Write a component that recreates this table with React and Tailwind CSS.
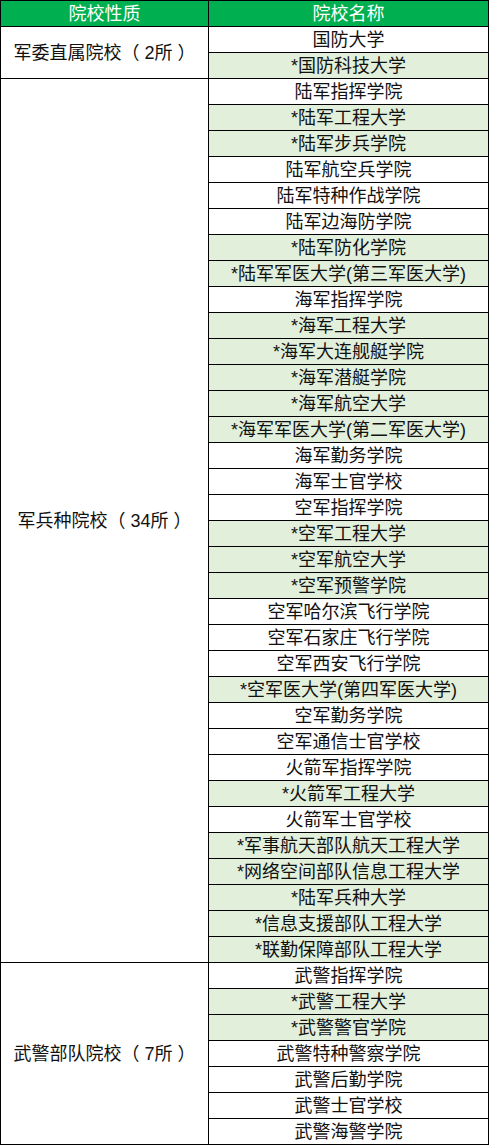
import React from "react";

const groups = [
  {
    name: "军委直属院校（ 2所 ）",
    rows: [
      ["国防大学", false],
      ["*国防科技大学", true],
    ],
  },
  {
    name: "军兵种院校（ 34所 ）",
    rows: [
      ["陆军指挥学院", false],
      ["*陆军工程大学", true],
      ["*陆军步兵学院", true],
      ["陆军航空兵学院", false],
      ["陆军特种作战学院", false],
      ["陆军边海防学院", false],
      ["*陆军防化学院", true],
      ["*陆军军医大学(第三军医大学)", true],
      ["海军指挥学院", false],
      ["*海军工程大学", true],
      ["*海军大连舰艇学院", true],
      ["*海军潜艇学院", true],
      ["*海军航空大学", true],
      ["*海军军医大学(第二军医大学)", true],
      ["海军勤务学院", false],
      ["海军士官学校", false],
      ["空军指挥学院", false],
      ["*空军工程大学", true],
      ["*空军航空大学", true],
      ["*空军预警学院", true],
      ["空军哈尔滨飞行学院", false],
      ["空军石家庄飞行学院", false],
      ["空军西安飞行学院", false],
      ["*空军医大学(第四军医大学)", true],
      ["空军勤务学院", false],
      ["空军通信士官学校", false],
      ["火箭军指挥学院", false],
      ["*火箭军工程大学", true],
      ["火箭军士官学校", false],
      ["*军事航天部队航天工程大学", true],
      ["*网络空间部队信息工程大学", true],
      ["*陆军兵种大学", true],
      ["*信息支援部队工程大学", true],
      ["*联勤保障部队工程大学", true],
    ],
  },
  {
    name: "武警部队院校（ 7所 ）",
    rows: [
      ["武警指挥学院", false],
      ["*武警工程大学", true],
      ["*武警警官学院", true],
      ["武警特种警察学院", false],
      ["武警后勤学院", false],
      ["武警士官学校", false],
      ["武警海警学院", false],
    ],
  },
];

export default function App() {
  return (
    <div
      className="w-[489px] bg-white text-[18px] leading-none text-[#111]"
      style={{ fontFamily: '"Liberation Sans", "Noto Sans CJK SC", sans-serif' }}
    >
      <div className="flex h-[27px] border-t border-black bg-[#00b050] text-white">
        <div className="flex w-[209px] items-center justify-center border-x border-b border-black">
          院校性质
        </div>
        <div className="flex flex-1 items-center justify-center border-r border-b border-black">
          院校名称
        </div>
      </div>
      {groups.map((g) => (
        <div key={g.name} className="flex">
          <div className="flex w-[209px] items-center justify-center whitespace-pre border-x border-b border-black">
            {g.name}
          </div>
          <div className="flex flex-1 flex-col">
            {g.rows.map(([label, green]) => (
              <div
                key={label}
                className={
                  green
                    ? "flex h-[26px] items-center justify-center border-r border-b border-black bg-[#e2efda]"
                    : "flex h-[26px] items-center justify-center border-r border-b border-black bg-white"
                }
              >
                {label}
              </div>
            ))}
          </div>
        </div>
      ))}
    </div>
  );
}
